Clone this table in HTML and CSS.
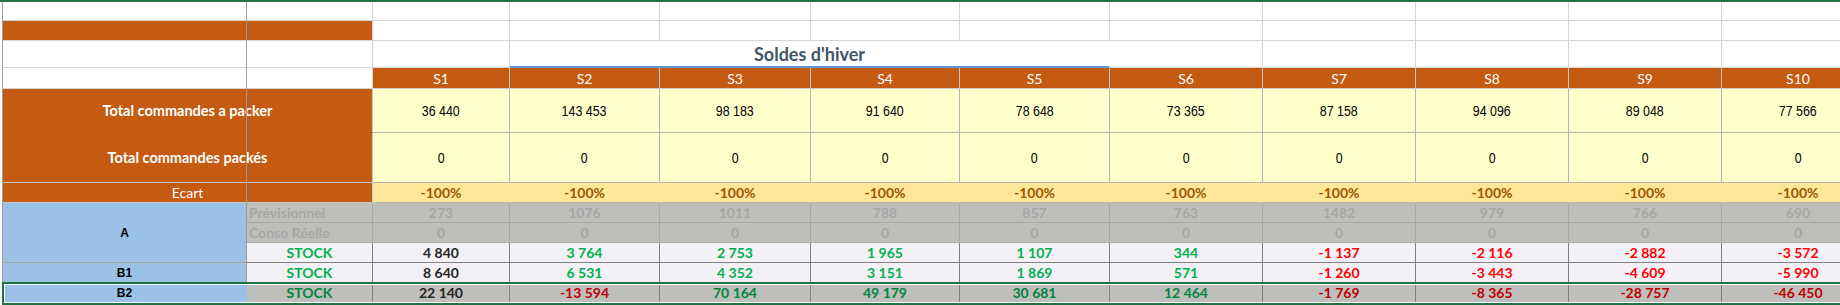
FILE: index.html
```html
<!DOCTYPE html>
<html lang="fr">
<head>
<meta charset="utf-8">
<title>Soldes d'hiver</title>
<link rel="stylesheet" href="styles.css">
</head>
<body>
<div class="wrap">
  <div class="sheet">
    <!-- r1 -->
    <div class="c w"></div><div class="c w"></div>
    <div class="c w"></div><div class="c w"></div><div class="c w"></div><div class="c w"></div><div class="c w"></div><div class="c w"></div><div class="c w"></div><div class="c w"></div><div class="c w"></div><div class="c w"></div>
    <!-- r2 -->
    <div class="c o"></div><div class="c o"></div>
    <div class="c w"></div><div class="c w"></div><div class="c w"></div><div class="c w"></div><div class="c w"></div><div class="c w"></div><div class="c w"></div><div class="c w"></div><div class="c w"></div><div class="c w"></div>
    <!-- r3 -->
    <div class="c w"></div><div class="c w"></div><div class="c w"></div>
    <div class="c title span4">Soldes d'hiver</div>
    <div class="c w"></div><div class="c w"></div><div class="c w"></div><div class="c w"></div><div class="c w"></div>
    <!-- r4 -->
    <div class="c w"></div><div class="c w"></div>
    <div class="c hd">S1</div><div class="c hd">S2</div><div class="c hd">S3</div><div class="c hd">S4</div><div class="c hd">S5</div><div class="c hd">S6</div><div class="c hd">S7</div><div class="c hd">S8</div><div class="c hd">S9</div><div class="c hd">S10</div>
    <!-- r5 -->
    <div class="c lab span2">Total commandes a packer</div>
    <div class="c y"><span class="nar">36 440</span></div><div class="c y"><span class="nar">143 453</span></div><div class="c y"><span class="nar">98 183</span></div><div class="c y"><span class="nar">91 640</span></div><div class="c y"><span class="nar">78 648</span></div><div class="c y"><span class="nar">73 365</span></div><div class="c y"><span class="nar">87 158</span></div><div class="c y"><span class="nar">94 096</span></div><div class="c y"><span class="nar">89 048</span></div><div class="c y"><span class="nar">77 566</span></div>
    <!-- r6 -->
    <div class="c lab lab-last span2">Total commandes packés</div>
    <div class="c y"><span class="nar">0</span></div><div class="c y"><span class="nar">0</span></div><div class="c y"><span class="nar">0</span></div><div class="c y"><span class="nar">0</span></div><div class="c y"><span class="nar">0</span></div><div class="c y"><span class="nar">0</span></div><div class="c y"><span class="nar">0</span></div><div class="c y"><span class="nar">0</span></div><div class="c y"><span class="nar">0</span></div><div class="c y"><span class="nar">0</span></div>
    <!-- r7 -->
    <div class="c lab ecl span2">Ecart</div>
    <div class="c ec">-100%</div><div class="c ec">-100%</div><div class="c ec">-100%</div><div class="c ec">-100%</div><div class="c ec">-100%</div><div class="c ec">-100%</div><div class="c ec">-100%</div><div class="c ec">-100%</div><div class="c ec">-100%</div><div class="c ec">-100%</div>
    <!-- r8 -->
    <div class="c grp rows3">A</div>
    <div class="c g gl">Prévisionnel</div>
    <div class="c g">273</div><div class="c g">1076</div><div class="c g">1011</div><div class="c g">788</div><div class="c g">857</div><div class="c g">763</div><div class="c g">1482</div><div class="c g">979</div><div class="c g">766</div><div class="c g">690</div>
    <!-- r9 -->
    <div class="c g gl">Conso Réelle</div>
    <div class="c g">0</div><div class="c g">0</div><div class="c g">0</div><div class="c g">0</div><div class="c g">0</div><div class="c g">0</div><div class="c g">0</div><div class="c g">0</div><div class="c g">0</div><div class="c g">0</div>
    <!-- r10 -->
    <div class="c s stk">STOCK</div>
    <div class="c s dk">4 840</div><div class="c s gr">3 764</div><div class="c s gr">2 753</div><div class="c s gr">1 965</div><div class="c s gr">1 107</div><div class="c s gr">344</div><div class="c s rd">-1 137</div><div class="c s rd">-2 116</div><div class="c s rd">-2 882</div><div class="c s rd">-3 572</div>
    <!-- r11 -->
    <div class="c grp">B1</div>
    <div class="c s stk">STOCK</div>
    <div class="c s dk">8 640</div><div class="c s gr">6 531</div><div class="c s gr">4 352</div><div class="c s gr">3 151</div><div class="c s gr">1 869</div><div class="c s gr">571</div><div class="c s rd">-1 260</div><div class="c s rd">-3 443</div><div class="c s rd">-4 609</div><div class="c s rd">-5 990</div>
    <!-- r12 -->
    <div class="c grp">B2</div>
    <div class="c t stk2">STOCK</div>
    <div class="c t dk">22 140</div><div class="c t rd2">-13 594</div><div class="c t gr2">70 164</div><div class="c t gr2">49 179</div><div class="c t gr2">30 681</div><div class="c t gr2">12 464</div><div class="c t rd2">-1 769</div><div class="c t rd2">-8 365</div><div class="c t rd2">-28 757</div><div class="c t rd2">-46 450</div>
  </div>
  <div class="freeze"></div>
  <div class="selection"></div>
</div>
</body>
</html>
```
FILE: styles.css
```css
* { box-sizing: border-box; }
html, body { margin: 0; padding: 0; background: #ffffff; overflow: hidden; }
body { border-top: 2px solid #217346; width: 1840px; height: 305px; }

.wrap { position: relative; padding-left: 2px; }

.sheet {
  display: grid;
  grid-template-columns: 244px 126px 137px 150px 151px 149px 150px 153px 153px 153px 153px 153px;
  grid-template-rows: 19px 20px 27px 21px 44px 50px 20px 20px 20px 20px 20px 20px;
  width: max-content;
  border-left: 1px solid #a0a0a0;
  font-family: "Lato", "Liberation Sans", sans-serif;
  font-size: 14px;
}

.c {
  display: flex;
  align-items: center;
  justify-content: center;
  border-right: 1px solid #d4d4d4;
  border-bottom: 1px solid #d4d4d4;
  white-space: nowrap;
  overflow: hidden;
}

.span2 { grid-column: span 2; }
.span4 { grid-column: span 4; }
.rows3 { grid-row: span 3; }

.w { background: #ffffff; }
.o { background: #c55a11; }

.title {
  background: #ffffff;
  border-right-color: #ffffff;
  border-bottom: 2px solid #5b9bd5;
  align-items: flex-end;
  padding-bottom: 1px;
  color: #44546a;
  font-weight: 700;
  font-size: 18px;
}

.hd {
  background: #c55a11;
  color: #ffffff;
  border-right-color: #d0c6c0;
  border-bottom-color: #c9c9c9;
}

.lab {
  background: #c55a11;
  color: #ffffff;
  font-weight: 700;
  font-size: 14.5px;
  border-right-color: #c9c9c9;
  border-bottom-color: #c55a11;
}
.lab-last { border-bottom-color: #c9c9c9; }
.ecl { font-weight: 400; font-size: 14px; border-bottom-color: #c9c9c9; }

.y {
  background: #ffffcc;
  color: #000000;
  font-family: "Liberation Sans", Arial, sans-serif;
  font-size: 15.5px;
  border-right-color: #b4b4b4;
  border-bottom-color: #b4b4b4;
}
.nar { display: inline-block; transform: scaleX(0.8); }

.ec {
  background: #ffe699;
  color: #9c5700;
  font-weight: 700;
  border-right-color: #ffe699;
  border-bottom-color: #b4b4b4;
}

.grp {
  background: #9bc2e6;
  color: #000000;
  font-family: "Liberation Sans", Arial, sans-serif;
  font-weight: 700;
  font-size: 12px;
  border-right-color: #9bc2e6;
  border-bottom-color: #a6a6a6;
}

.g {
  background: #bebfbb;
  color: #a6a6a6;
  font-weight: 700;
  border-right-color: #a8a8a8;
  border-bottom-color: #a8a8a8;
}
.gl { justify-content: flex-start; padding-left: 2px; }

.s {
  background: #f3f1f5;
  font-weight: 700;
  border-right-color: #808080;
  border-bottom-color: #808080;
}
.t {
  background: #bebfbb;
  font-weight: 700;
  border-right-color: #808080;
  border-bottom-color: #808080;
}

.stk { color: #00b050; }
.stk2 { color: #00853e; }
.dk { color: #262626; }
.gr { color: #00b050; }
.rd { color: #ff0000; }
.gr2 { color: #00853e; }
.rd2 { color: #c00000; }

.freeze {
  position: absolute;
  left: 246px;
  top: 0;
  width: 1px;
  height: 282px;
  background: #9a9a9a;
}

.selection {
  position: absolute;
  left: 2px;
  top: 280px;
  width: 1850px;
  height: 23px;
  border: 2px solid #217346;
  box-shadow: inset 0 0 0 1px #ffffff;
}
```
